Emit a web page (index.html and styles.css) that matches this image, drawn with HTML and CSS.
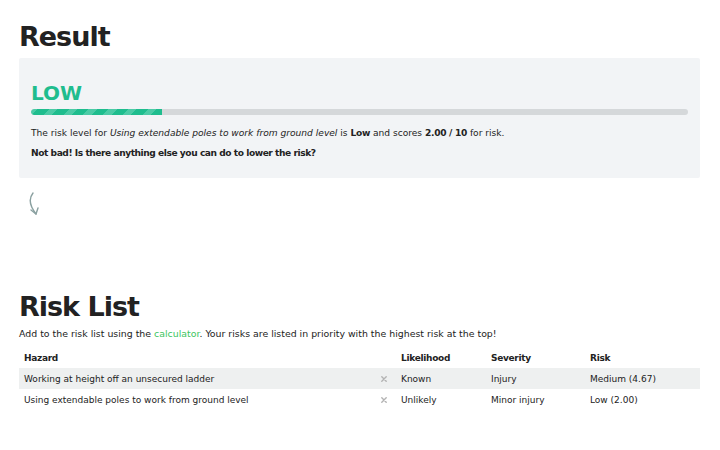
FILE: index.html
```html
<!DOCTYPE html>
<html>
<head>
<meta charset="utf-8">
<link rel="stylesheet" href="styles.css">
</head>
<body>
<main class="page">
  <h1 class="title">Result</h1>
  <section class="card">
    <div class="level">LOW</div>
    <div class="bar"><div class="fill" style="width:20%"></div></div>
    <p class="line">The risk level for <em>Using extendable poles to work from ground level</em> is <b>Low</b> and scores <b>2.00 / 10</b> for risk.</p>
    <p class="line strong">Not bad! Is there anything else you can do to lower the risk?</p>
  </section>
  <div class="arrow">
    <svg width="16" height="26" viewBox="0 0 16 26"><path d="M5 1 C1 6 1 13 8 22" fill="none" stroke="#8aa0a0" stroke-width="1.4" stroke-linecap="round"/><path d="M3 18 L8 22 L10 16" fill="none" stroke="#8aa0a0" stroke-width="1.4" stroke-linecap="round" stroke-linejoin="round"/></svg>
  </div>
  <h1 class="title list-title">Risk List</h1>
  <p class="intro">Add to the risk list using the <a class="link">calculator</a>. Your risks are listed in priority with the highest risk at the top!</p>
  <table class="table">
    <thead>
      <tr><th class="c-haz">Hazard</th><th class="c-x"></th><th class="c-lik">Likelihood</th><th class="c-sev">Severity</th><th class="c-risk">Risk</th></tr>
    </thead>
    <tbody>
      <tr class="alt"><td>Working at height off an unsecured ladder</td><td class="x"><svg class="xi" width="6" height="6" viewBox="0 0 6 6"><path d="M0.8 0.8 L5.2 5.2 M5.2 0.8 L0.8 5.2" stroke="#b3b3b3" stroke-width="1.4" stroke-linecap="round"/></svg></td><td>Known</td><td>Injury</td><td>Medium (4.67)</td></tr>
      <tr><td>Using extendable poles to work from ground level</td><td class="x"><svg class="xi" width="6" height="6" viewBox="0 0 6 6"><path d="M0.8 0.8 L5.2 5.2 M5.2 0.8 L0.8 5.2" stroke="#b3b3b3" stroke-width="1.4" stroke-linecap="round"/></svg></td><td>Unlikely</td><td>Minor injury</td><td>Low (2.00)</td></tr>
    </tbody>
  </table>
</main>
</body>
</html>
```
FILE: styles.css
```css
* { box-sizing: border-box; }
body { margin: 0; background: #fff; font-family: "DejaVu Sans", sans-serif; color: #222; }
.page { padding: 0 20px 0 19px; }
.title { margin: 0; padding-top: 20px; font-size: 27px; font-weight: 700; color: #222; line-height: 34px; letter-spacing: -1px; }
.card { margin-top: 4px; background: #f2f4f6; border-radius: 2px; padding: 23px 12px 19px 12px; }
.level { color: #1fbd8e; font-size: 20px; font-weight: 700; line-height: 24px; }
.bar { margin-top: 4px; height: 6px; background: #d5d8da; border-radius: 3px; overflow: hidden; }
.fill { height: 100%; background: repeating-linear-gradient(-45deg, #1fbd8e 0 8px, #4ccba6 8px 14px); border-radius: 3px 0 0 3px; }
.line { margin: 12px 0 0; font-size: 9.1px; line-height: 12px; }
.line b { letter-spacing: -0.3px; }
.line.strong { margin-top: 8px; font-weight: 700; letter-spacing: -0.45px; }
.arrow { padding: 14px 0 0 9px; height: 112px; }
.list-title { padding-top: 0; }
.intro { margin: 4px 0 0; font-size: 9.4px; line-height: 12px; }
.link { color: #3cc55e; }
.table { margin-top: 8px; width: 100%; border-collapse: collapse; font-size: 9px; }
.table th { text-align: left; font-weight: 700; height: 20px; padding: 0 5px; letter-spacing: -0.3px; }
.table td { height: 21px; padding: 0 5px; }
.table tr.alt td { background: #eef0f0; }
.c-haz { width: 353px; }
.c-x { width: 24px; }
.c-lik { width: 90px; }
.c-sev { width: 99px; }
.x { text-align: center; line-height: 0; }
.xi { display: inline-block; vertical-align: middle; }
```
